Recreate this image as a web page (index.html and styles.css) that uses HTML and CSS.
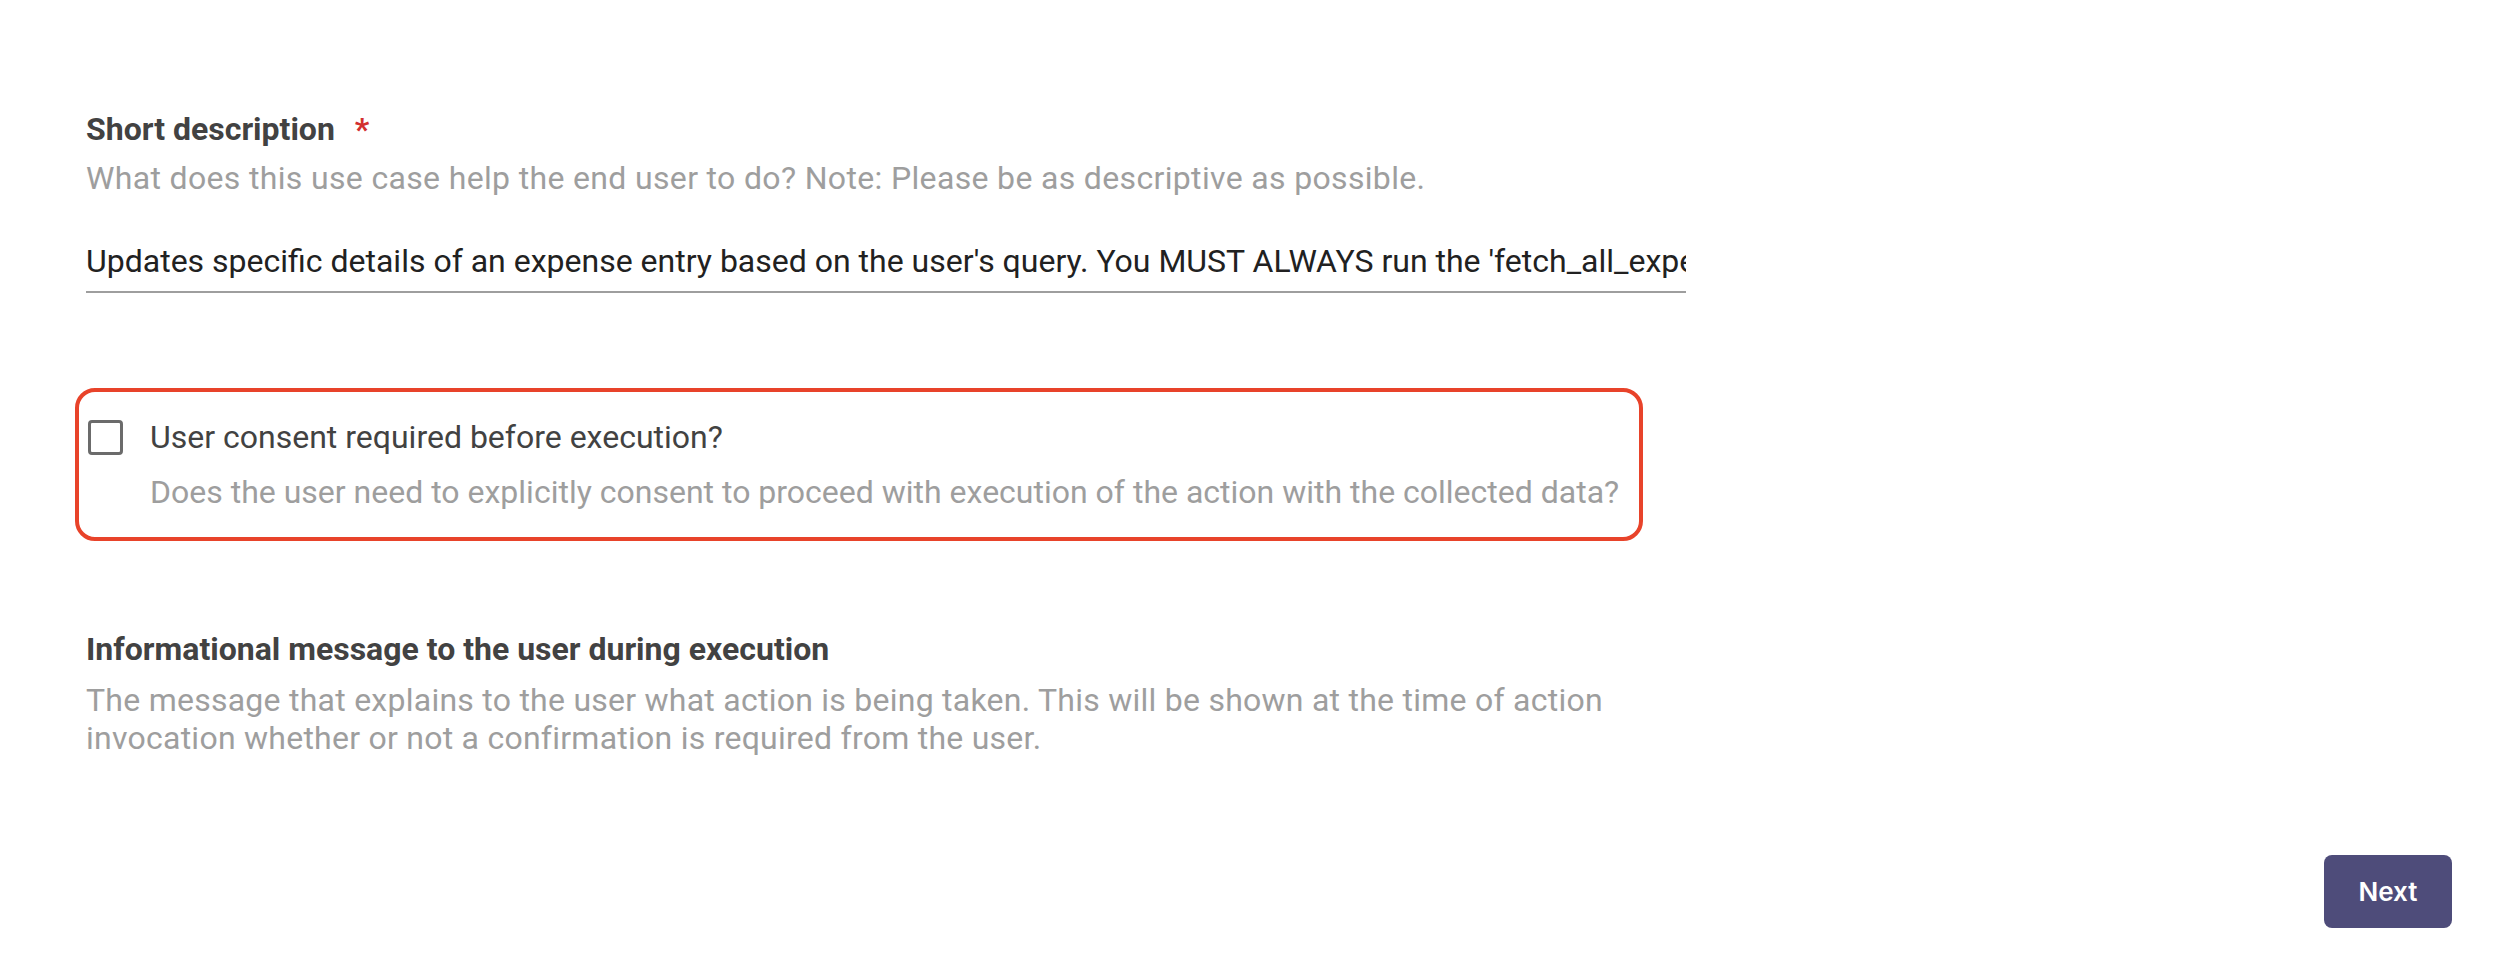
FILE: index.html
```html
<!DOCTYPE html>
<html lang="en">
<head>
<meta charset="utf-8">
<title>Action details</title>
<link rel="stylesheet" href="styles.css">
</head>
<body>
<div class="page">
  <form class="form">
    <div class="field">
      <div class="label">Short description <span class="req">*</span></div>
      <div class="hint">What does this use case help the end user to do? Note: Please be as descriptive as possible.</div>
      <input class="text-input" type="text" value="Updates specific details of an expense entry based on the user's query. You MUST ALWAYS run the 'fetch_all_expenses' action first to get the expense id before updating.">
    </div>

    <div class="consent">
      <div class="consent-row">
        <span class="checkbox"></span>
        <span class="consent-label">User consent required before execution?</span>
      </div>
      <div class="consent-desc">Does the user need to explicitly consent to proceed with execution of the action with the collected data?</div>
    </div>

    <div class="field info">
      <div class="label">Informational message to the user during execution</div>
      <div class="hint info-hint">The message that explains to the user what action is being taken. This will be shown at the time of action invocation whether or not a confirmation is required from the user.</div>
    </div>
  </form>
  <div class="footer">
    <button class="next" type="button">Next</button>
  </div>
</div>
</body>
</html>
```

FILE: styles.css
```css
html, body {
  margin: 0;
  padding: 0;
  background: #ffffff;
}

body {
  font-family: Roboto, "Liberation Sans", sans-serif;
  width: 2498px;
  height: 968px;
  overflow: hidden;
}

.page {
  display: flex;
  flex-direction: column;
  height: 968px;
}

.form {
  display: flex;
  flex-direction: column;
  padding: 110px 0 0 86px;
  width: 1600px;
}

.field {
  display: flex;
  flex-direction: column;
}

.label {
  font-size: 32px;
  font-weight: 700;
  line-height: 38px;
  color: #424242;
}

.req {
  color: #d32f2f;
  margin-left: 12px;
}

.hint {
  margin-top: 11px;
  font-size: 32px;
  line-height: 38px;
  letter-spacing: 0.34px;
  color: #9e9e9e;
}

.info-hint {
  margin-top: 13px;
  letter-spacing: 0.25px;
}

.text-input {
  display: block;
  box-sizing: content-box;
  margin: 45px 0 0 0;
  width: 1600px;
  height: 38px;
  padding: 0 0 11px 0;
  border: none;
  border-bottom: 2px solid #9e9e9e;
  outline: none;
  font-family: Roboto, "Liberation Sans", sans-serif;
  font-size: 32px;
  line-height: 38px;
  letter-spacing: 0;
  color: #212121;
  background: transparent;
}

.consent {
  margin: 95px 0 0 -11px;
  width: 1568px;
  height: 153px;
  box-sizing: border-box;
  border: 4px solid #e8432a;
  border-radius: 20px;
  padding: 26px 0 0 9px;
}

.consent-row {
  display: flex;
  align-items: center;
  gap: 27px;
  height: 38px;
}

.checkbox {
  width: 35px;
  height: 35px;
  box-sizing: border-box;
  border: 3px solid #6b6b6b;
  border-radius: 4px;
  flex: none;
}

.consent-label {
  font-size: 32px;
  line-height: 38px;
  color: #424242;
}

.consent-desc {
  margin: 17px 0 0 62px;
  font-size: 32px;
  line-height: 38px;
  color: #9e9e9e;
}

.info {
  margin-top: 89px;
}

.footer {
  display: flex;
  justify-content: flex-end;
  margin-top: auto;
  padding: 0 46px 40px 0;
}

.next {
  width: 128px;
  height: 73px;
  border: none;
  border-radius: 8px;
  background: #4e4c7a;
  color: #ffffff;
  font-family: Inter, "Open Sans", sans-serif;
  font-size: 26px;
  font-weight: 600;
}
```
